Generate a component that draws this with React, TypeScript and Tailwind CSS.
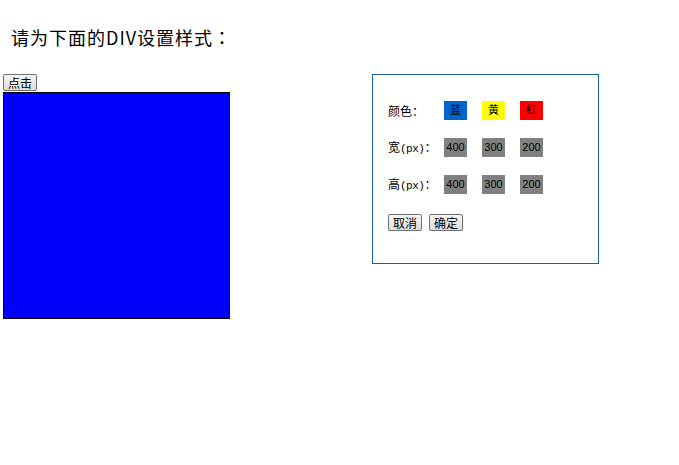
import React from 'react';

const cjk = "font-['SimSun','Noto_Sans_CJK_SC',sans-serif]";

const rows = [
  { label: '颜色：', items: [
    { text: '蓝', cls: 'bg-[#0066cc] text-black' },
    { text: '黄', cls: 'bg-[#ffff00] text-black' },
    { text: '红', cls: 'bg-[#ff0000] text-black' },
  ] },
  { label: '宽', px: true, items: [
    { text: '400', cls: 'bg-[#808080] text-black' },
    { text: '300', cls: 'bg-[#808080] text-black' },
    { text: '200', cls: 'bg-[#808080] text-black' },
  ] },
  { label: '高', px: true, items: [
    { text: '400', cls: 'bg-[#808080] text-black' },
    { text: '300', cls: 'bg-[#808080] text-black' },
    { text: '200', cls: 'bg-[#808080] text-black' },
  ] },
];

function Btn({ children }: { children: React.ReactNode }) {
  return (
    <button className="h-[17px] px-[4px] text-[12px] leading-none text-black bg-gradient-to-b from-[#f6f6f6] to-[#dcdcdc] border border-[#707070] rounded-[2px]">
      {children}
    </button>
  );
}

export default function App() {
  return (
    <div className={`w-[679px] h-[465px] bg-white ${cjk}`}>
      {/* 标题 */}
      <p className="pt-[25px] pl-[11px] text-[18px] leading-[24px] tracking-[1px] text-black font-['Noto_Sans_CJK_JP',sans-serif]">
        请为下面的DIV设置样式：
      </p>

      <div className="flex items-start mt-[25px] pl-[3px]">
        {/* 左侧 */}
        <div className="flex flex-col items-start">
          <Btn>点击</Btn>
          <div className="w-[227px] h-[227px] bg-[#0000ff] border border-black mt-[1px]" />
        </div>

        {/* 设置面板 */}
        <div className="ml-[142px] w-[227px] h-[190px] border border-[#1a5fa8] pt-[26px] pl-[15px]">
          <div className="flex flex-col gap-[18px]">
            {rows.map((row) => (
              <div key={row.label} className="flex items-center h-[19px]">
                <span className="w-[56px] text-[12px] text-black whitespace-nowrap">
                  {row.label}
                  {row.px && (
                    <span className="font-['Liberation_Mono',monospace] text-[11px] tracking-[-0.5px]">(px)</span>
                  )}
                  {row.px && '：'}
                </span>
                <div className="flex gap-[15px]">
                  {row.items.map((it, i) => (
                    <span
                      key={i}
                      className={`w-[23px] h-[19px] flex items-center justify-center text-[11px] font-['Liberation_Sans','Noto_Sans_CJK_SC',sans-serif] ${it.cls}`}
                    >
                      {it.text}
                    </span>
                  ))}
                </div>
              </div>
            ))}
          </div>
          <div className="flex gap-[7px] mt-[20px]">
            <Btn>取消</Btn>
            <Btn>确定</Btn>
          </div>
        </div>
      </div>
    </div>
  );
}
